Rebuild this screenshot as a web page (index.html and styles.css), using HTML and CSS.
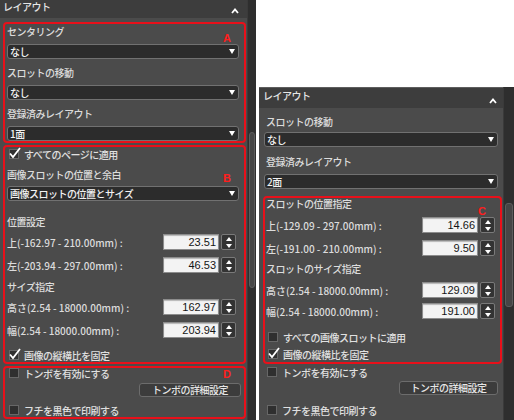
FILE: index.html
```html
<!DOCTYPE html>
<html lang="ja">
<head>
    <meta charset="utf-8">
    <title>レイアウト</title>
    <link rel="stylesheet" href="styles.css">
</head>
<body>

<!-- left: centering panel -->
<div class="panel panel-a">
    <div class="main">
        <div class="header">
            <span class="title">レイアウト</span>
            <svg class="chev" viewBox="0 0 8 6"><polyline points="1,5 4,1.5 7,5"/></svg>
        </div>

        <div class="box box-a">
            <span class="tag">A</span>
            <div class="lbl">センタリング</div>
            <div class="sel"><span>なし</span><i class="arrow"></i></div>
            <div class="lbl">スロットの移動</div>
            <div class="sel"><span>なし</span><i class="arrow"></i></div>
            <div class="lbl">登録済みレイアウト</div>
            <div class="sel"><span>1面</span><i class="arrow"></i></div>
        </div>

        <div class="box box-b">
            <span class="tag">B</span>
            <div class="chk"><span class="cb on"><svg viewBox="0 0 12 12"><path d="M1 6.5 4 10 11 1"/></svg></span>すべてのページに適用</div>
            <div class="lbl">画像スロットの位置と余白</div>
            <div class="sel"><span>画像スロットの位置とサイズ</span><i class="arrow"></i></div>
            <div class="lbl sub">位置設定</div>
            <div class="row"><span class="txt">上(-162.97 - 210.00mm) :</span><span class="num">23.51</span><span class="spin"><i class="up"></i><i class="dn"></i></span></div>
            <div class="row"><span class="txt">左(-203.94 - 297.00mm) :</span><span class="num">46.53</span><span class="spin"><i class="up"></i><i class="dn"></i></span></div>
            <div class="lbl">サイズ指定</div>
            <div class="row"><span class="txt">高さ(2.54 - 18000.00mm) :</span><span class="num">162.97</span><span class="spin"><i class="up"></i><i class="dn"></i></span></div>
            <div class="row"><span class="txt">幅(2.54 - 18000.00mm) :</span><span class="num">203.94</span><span class="spin"><i class="up"></i><i class="dn"></i></span></div>
            <div class="chk last"><span class="cb on"><svg viewBox="0 0 12 12"><path d="M1 6.5 4 10 11 1"/></svg></span>画像の縦横比を固定</div>
        </div>

        <div class="box box-d">
            <span class="tag">D</span>
            <div class="chk first"><span class="cb"></span>トンボを有効にする</div>
            <div class="btn">トンボの詳細設定</div>
            <div class="chk"><span class="cb"></span>フチを黒色で印刷する</div>
        </div>
    </div>
    <div class="scroll"><div class="thumb"></div></div>
</div>

<!-- right: slot position panel -->
<div class="panel panel-b">
    <div class="main">
        <div class="header">
            <span class="title">レイアウト</span>
            <svg class="chev" viewBox="0 0 8 6"><polyline points="1,5 4,1.5 7,5"/></svg>
        </div>

        <div class="lbl">スロットの移動</div>
        <div class="sel"><span>なし</span><i class="arrow"></i></div>
        <div class="lbl">登録済みレイアウト</div>
        <div class="sel"><span>2面</span><i class="arrow"></i></div>

        <div class="box box-c">
            <span class="tag">C</span>
            <div class="lbl top">スロットの位置指定</div>
            <div class="row"><span class="txt">上(-129.09 - 297.00mm) :</span><span class="num">14.66</span><span class="spin"><i class="up"></i><i class="dn"></i></span></div>
            <div class="row"><span class="txt">左(-191.00 - 210.00mm) :</span><span class="num">9.50</span><span class="spin"><i class="up"></i><i class="dn"></i></span></div>
            <div class="lbl">スロットのサイズ指定</div>
            <div class="row"><span class="txt">高さ(2.54 - 18000.00mm) :</span><span class="num">129.09</span><span class="spin"><i class="up"></i><i class="dn"></i></span></div>
            <div class="row"><span class="txt">幅(2.54 - 18000.00mm) :</span><span class="num">191.00</span><span class="spin"><i class="up"></i><i class="dn"></i></span></div>
            <div class="chk all"><span class="cb"></span>すべての画像スロットに適用</div>
            <div class="chk"><span class="cb on"><svg viewBox="0 0 12 12"><path d="M1 6.5 4 10 11 1"/></svg></span>画像の縦横比を固定</div>
        </div>

        <div class="chk tombo"><span class="cb"></span>トンボを有効にする</div>
        <div class="btn">トンボの詳細設定</div>
        <div class="chk edge"><span class="cb"></span>フチを黒色で印刷する</div>
    </div>
    <div class="scroll"><div class="thumb"></div></div>
</div>

</body>
</html>
```

FILE: styles.css
```css
* {
    box-sizing: border-box;
}
body {
    margin: 0;
    background: #fff;
    font-family: "Noto Sans CJK JP", sans-serif;
    font-size: 10px;
    font-weight: 500;
    letter-spacing: -0.5px;
    color: #dcdcdc;
    display: flex;
    align-items: flex-start;
    height: 420px;
    overflow: hidden;
}
.panel {
    display: flex;
    background: #4b4b4b;
}
.panel-a {
    width: 256px;
    height: 420px;
}
.panel-b {
    width: 255px;
    height: 333px;
    margin: 87px 0 0 3px;
}
.main {
    flex: 1;
    min-width: 0;
}

/* scrollbars */
.scroll {
    background: #2e2e2e;
    border-left: 1px solid #3a3a3a;
    padding: 0 1px;
}
.panel-a .scroll {
    width: 9px;
}
.panel-b .scroll {
    width: 11px;
}
.thumb {
    background: #454545;
    border: 1px solid #5c5c5c;
    border-radius: 3px;
}
.panel-a .thumb {
    margin-top: 132px;
    height: 156px;
}
.panel-b .thumb {
    margin-top: 116px;
    height: 104px;
}

/* header */
.header {
    display: flex;
    justify-content: space-between;
    align-items: flex-start;
    background: #3d3d3d;
    color: #e6e6e6;
}
.panel-a .header {
    height: 18px;
    padding: 0 8px 0 3px;
}
.panel-a .title {
    line-height: 14px;
}
.panel-a .chev {
    margin-top: 8px;
}
.panel-b .header {
    height: 21px;
    border-top: 1px solid #5e5e5e;
    padding: 0 6px 0 4px;
}
.panel-b .title {
    line-height: 16px;
}
.panel-b .chev {
    margin-top: 10px;
}
.chev {
    width: 8px;
    height: 6px;
}
.chev polyline {
    fill: none;
    stroke: #fff;
    stroke-width: 1.8;
}

/* red annotation frames */
.box {
    position: relative;
    border: 2px solid #e8101a;
    border-radius: 4px;
}
.tag {
    position: absolute;
    color: #ff1e1e;
    font: bold 11px "Liberation Sans", sans-serif;
    letter-spacing: 0;
}
.box-a {
    margin: 4px 1px 0 3px;
    padding: 0 3px 0 2px;
}
.box-a .tag {
    left: 218px;
    top: 8px;
}
.box-b {
    margin: 2px 1px 0 3px;
    padding: 0 3px 0 2px;
}
.box-b .tag {
    left: 218px;
    top: 25px;
}
.box-d {
    margin: 2px 1px 0 3px;
    padding: 0 3px 0 2px;
}
.box-d .tag {
    left: 218px;
    top: 0;
}
.box-c {
    margin: 7px 1px 0 4px;
    padding: 0 5px 1px 1px;
}
.box-c .tag {
    left: 213px;
    top: 7px;
}

/* labels and dropdowns */
.lbl {
    height: 16px;
    line-height: 16px;
}
.sel {
    display: flex;
    justify-content: space-between;
    align-items: center;
    height: 15px;
    margin-top: 4px;
    padding: 0 3px 0 2px;
    background: #2c2c2c;
    border: 1px solid #717171;
    border-radius: 3px;
    color: #f2f2f2;
}
.arrow {
    width: 0;
    height: 0;
    border-left: 3.5px solid transparent;
    border-right: 3.5px solid transparent;
    border-top: 5px solid #fff;
}
.box-a .sel {
    margin-right: 2px;
}
.box-a .lbl {
    margin-top: 6px;
}
.box-a .lbl:nth-of-type(1) {
    margin-top: 0;
}
.box-b .lbl {
    margin-top: 6px;
}
.box-b .lbl:nth-of-type(1) {
    margin-top: 4px;
}
.box-b .sel {
    margin: 3px 2px 0 0;
}
.box-b .lbl.sub {
    margin-top: 13px;
}
.panel-b .main > .lbl {
    margin: 6px 0 0 7px;
}
.panel-b .main > .lbl + .sel + .lbl {
    margin-top: 7px;
}
.panel-b .main > .sel {
    margin: 2px 5px 0 5px;
}
.panel-b .main > .lbl + .sel + .lbl + .sel {
    margin-top: 4px;
}

/* numeric rows */
.row {
    display: flex;
    align-items: center;
    height: 16px;
    margin-top: 7px;
}
.txt {
    flex: 1;
    letter-spacing: 0;
}
.num {
    width: 56px;
    height: 16px;
    padding-right: 2px;
    background: #f3f3f3;
    border: 1px solid #8c8c8c;
    box-shadow: inset 0 1px 1px rgba(0, 0, 0, 0.25);
    color: #151515;
    text-align: right;
    font: 11px/14px "Liberation Sans", sans-serif;
    letter-spacing: 0;
}
.spin {
    display: flex;
    flex-direction: column;
    justify-content: space-around;
    align-items: center;
    width: 15px;
    height: 16px;
    margin-left: 2px;
    background: #333;
    border: 1px solid #7a7a7a;
    border-radius: 2px;
}
.spin .up,
.spin .dn {
    width: 0;
    height: 0;
    border-left: 3.5px solid transparent;
    border-right: 3.5px solid transparent;
}
.spin .up {
    border-bottom: 4px solid #fff;
}
.spin .dn {
    border-top: 4px solid #fff;
}
.box-b .row {
    margin-right: 5px;
}
.box-b .lbl + .row {
    margin-top: 4px;
}
.box-c .lbl + .row {
    margin-top: 5px;
}
.box-c .lbl.top {
    margin-top: -2px;
}
.box-c .row + .lbl {
    margin-top: 5px;
}
.box-c .lbl + .row + .row {
    margin-top: 7px;
}
.box-c .row + .lbl + .row + .row {
    margin-top: 5px;
}

/* checkboxes */
.chk {
    display: flex;
    align-items: center;
    height: 14px;
    padding-left: 2px;
    color: #e0e0e0;
}
.cb {
    position: relative;
    width: 10px;
    height: 10px;
    margin-right: 5px;
    background: #2f2f2f;
    border: 1px solid #676767;
}
.cb svg {
    position: absolute;
    left: -1px;
    top: -3px;
    width: 12px;
    height: 12px;
}
.cb path {
    fill: none;
    stroke: #fff;
    stroke-width: 1.8;
}
.box-b .chk.last {
    margin-top: 10px;
}
.box-d .chk {
    margin-top: 6px;
}
.box-d .chk.first {
    margin-top: -2px;
}
.box-c .chk.all {
    margin-top: 11px;
}
.box-c .chk.all + .chk {
    margin-top: 3px;
}
.panel-b .chk.tombo {
    margin: 1px 0 0 6px;
}
.panel-b .chk.edge {
    margin: 8px 0 0 6px;
}

/* buttons */
.btn {
    height: 14px;
    line-height: 12px;
    margin-top: 3px;
    background: #3c3c3c;
    border: 1px solid #6c6c6c;
    border-radius: 3px;
    color: #e6e6e6;
    text-align: center;
}
.box-d .btn {
    width: 102px;
    margin-left: auto;
    margin-right: 0;
}
.panel-b .btn {
    width: 99px;
    margin: 2px 5px 0 auto;
}
```
